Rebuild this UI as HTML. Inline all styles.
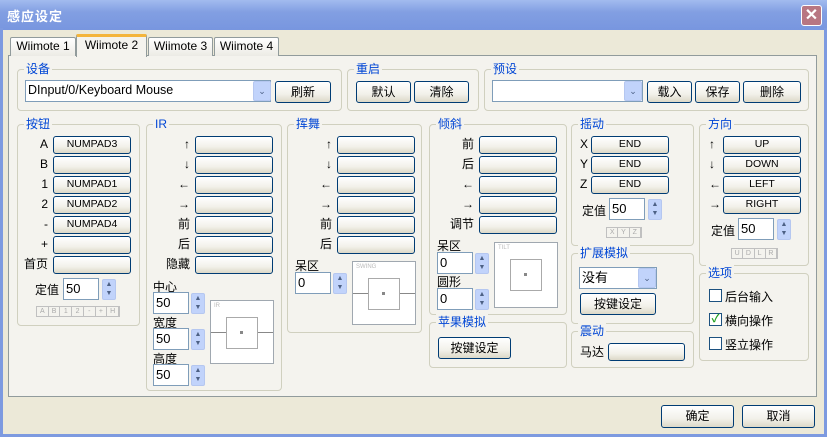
<!DOCTYPE html>
<html><head><meta charset="utf-8"><style>
*{box-sizing:border-box;margin:0;padding:0}
body{width:827px;height:437px;position:relative;overflow:hidden;background:#ece9d8;font:12px "Liberation Sans","Noto Sans CJK SC",sans-serif;color:#000}
div,span{position:absolute}
.title{left:0;top:0;width:827px;height:30px;background:linear-gradient(#a2bbef,#829fe2 40%,#7896df);}
.frame{left:0;top:28px;width:827px;height:409px;border:3px solid #7d9ae0;border-top:none;}
.tt{left:7px;top:6px;color:#fff;font-size:13px;font-weight:bold;letter-spacing:1px}
.cls{left:801px;top:5px;width:21px;height:21px;border:1px solid #fff;border-radius:3px;background:#b87682;color:#fff;font-size:16px;line-height:19px;text-align:center;font-weight:bold}
.panel{left:8px;top:55px;width:809px;height:342px;background:#f4f3ee;border:1px solid #919b9c}
.tab{top:37px;height:19px;border:1px solid #919b9c;border-bottom:none;background:linear-gradient(#fff,#ecebe5);font-size:12px;text-align:center;line-height:17px;border-radius:2px 2px 0 0}
.tab.a{top:34px;height:23px;background:#f4f3ee;border-top:3px solid #f4b53c;line-height:17px;z-index:2}
.g{border:1px solid #d0d0bf;border-radius:4px}
.gl{top:-9px;left:6px;background:#f4f3ee;color:#0046d5;padding:0 2px;white-space:nowrap;font-size:12px;line-height:16px}
.b{border:1px solid #003c74;border-radius:3px;background:linear-gradient(#fff,#f2f1ea 60%,#dcd8c8);text-align:center;font-size:10.5px;line-height:15px;white-space:nowrap}
.bb{font-size:12px;line-height:20px}
.l{text-align:right;width:40px;line-height:17px;white-space:nowrap}
.in{border:1px solid #7f9db9;background:#fff;padding-left:2px;font-size:13px;line-height:19px}
.sp{width:14px;height:21px;background:#c1d3fb;border:1px solid #b5c7f0;border-radius:2px;color:#4d6185;font-size:7px;line-height:9px;text-align:center}
.cb{width:18px;height:20px;background:#c1d3fb;border:1px solid #b5c7f0;border-radius:2px;color:#4d6185;font-size:9px;line-height:18px;text-align:center}
.box{background:#fff;border:1px solid #a0a8b0}
.sm{height:11px;border:1px solid #c0c0c0;font-size:7px;color:#aaa;line-height:9px;display:flex}
.sm i{font-style:normal;flex:1;border-right:1px solid #c0c0c0;text-align:center}
.ck{width:13px;height:13px;border:1px solid #1c5180;background:#fff}
</style></head><body>
<div class="title"></div><div class="frame"></div>
<div class="tt">感应设定</div><div class="cls">✕</div>
<div class="panel"></div>
<div class="tab" style="left:10px;width:66px">Wiimote 1</div>
<div class="tab a" style="left:76px;width:71px">Wiimote 2</div>
<div class="tab" style="left:148px;width:65px">Wiimote 3</div>
<div class="tab" style="left:214px;width:65px">Wiimote 4</div>

<div class="g" style="left:17px;top:69px;width:325px;height:42px"><span class="gl">设备</span></div>
<div class="in" style="left:25px;top:80px;width:246px;height:22px;font-size:12.5px">DInput/0/Keyboard Mouse</div>
<div class="cb" style="left:253px;top:81px">⌄</div>
<div class="b bb" style="left:275px;top:81px;width:56px;height:22px">刷新</div>
<div class="g" style="left:347px;top:69px;width:132px;height:42px"><span class="gl">重启</span></div>
<div class="b bb" style="left:356px;top:81px;width:55px;height:22px">默认</div>
<div class="b bb" style="left:414px;top:81px;width:55px;height:22px">清除</div>
<div class="g" style="left:484px;top:69px;width:325px;height:42px"><span class="gl">预设</span></div>
<div class="in" style="left:492px;top:80px;width:151px;height:22px"></div>
<div class="cb" style="left:624px;top:81px">⌄</div>
<div class="b bb" style="left:647px;top:81px;width:45px;height:22px">载入</div>
<div class="b bb" style="left:695px;top:81px;width:45px;height:22px">保存</div>
<div class="b bb" style="left:743px;top:81px;width:58px;height:22px">删除</div>

<div class="g" style="left:17px;top:124px;width:123px;height:202px"><span class="gl">按钮</span></div>
<div class="l" style="left:8px;top:136px">A</div><div class="b" style="left:53px;top:136px;width:78px;height:18px">NUMPAD3</div>
<div class="l" style="left:8px;top:156px">B</div><div class="b" style="left:53px;top:156px;width:78px;height:18px"></div>
<div class="l" style="left:8px;top:176px">1</div><div class="b" style="left:53px;top:176px;width:78px;height:18px">NUMPAD1</div>
<div class="l" style="left:8px;top:196px">2</div><div class="b" style="left:53px;top:196px;width:78px;height:18px">NUMPAD2</div>
<div class="l" style="left:8px;top:216px">-</div><div class="b" style="left:53px;top:216px;width:78px;height:18px">NUMPAD4</div>
<div class="l" style="left:8px;top:236px">+</div><div class="b" style="left:53px;top:236px;width:78px;height:18px"></div>
<div class="l" style="left:8px;top:256px">首页</div><div class="b" style="left:53px;top:256px;width:78px;height:18px"></div>
<div style="left:35px;top:281px">定值</div>
<div class="in" style="left:63px;top:278px;width:36px;height:22px">50</div>
<div class="sp" style="left:102px;top:279px">▲<br>▼</div>
<div class="sm" style="left:36px;top:306px;width:84px"><i>A</i><i>B</i><i>1</i><i>2</i><i>-</i><i>+</i><i>H</i></div>

<div class="g" style="left:146px;top:124px;width:136px;height:267px"><span class="gl">IR</span></div>
<div class="l" style="left:150px;top:136px">↑</div><div class="b" style="left:195px;top:136px;width:78px;height:18px"></div>
<div class="l" style="left:150px;top:156px">↓</div><div class="b" style="left:195px;top:156px;width:78px;height:18px"></div>
<div class="l" style="left:150px;top:176px">←</div><div class="b" style="left:195px;top:176px;width:78px;height:18px"></div>
<div class="l" style="left:150px;top:196px">→</div><div class="b" style="left:195px;top:196px;width:78px;height:18px"></div>
<div class="l" style="left:150px;top:216px">前</div><div class="b" style="left:195px;top:216px;width:78px;height:18px"></div>
<div class="l" style="left:150px;top:236px">后</div><div class="b" style="left:195px;top:236px;width:78px;height:18px"></div>
<div class="l" style="left:150px;top:256px">隐藏</div><div class="b" style="left:195px;top:256px;width:78px;height:18px"></div>
<div style="left:153px;top:278px">中心</div>
<div class="in" style="left:153px;top:292px;width:36px;height:22px">50</div><div class="sp" style="left:191px;top:293px">▲<br>▼</div>
<div style="left:153px;top:314px">宽度</div>
<div class="in" style="left:153px;top:328px;width:36px;height:22px">50</div><div class="sp" style="left:191px;top:329px">▲<br>▼</div>
<div style="left:153px;top:350px">高度</div>
<div class="in" style="left:153px;top:364px;width:36px;height:22px">50</div><div class="sp" style="left:191px;top:365px">▲<br>▼</div>
<div class="box" style="left:210px;top:300px;width:64px;height:64px"><span style="left:3px;top:2px;font-size:6px;color:#bbb">IR</span><span style="left:0;top:31px;width:62px;height:1px;background:#888"></span><span style="left:15px;top:16px;width:32px;height:32px;border:1px solid #aaa;background:#fff"></span><span style="left:29px;top:30px;width:3px;height:3px;background:#888"></span></div>

<div class="g" style="left:287px;top:124px;width:135px;height:209px"><span class="gl">挥舞</span></div>
<div class="l" style="left:292px;top:136px">↑</div><div class="b" style="left:337px;top:136px;width:78px;height:18px"></div>
<div class="l" style="left:292px;top:156px">↓</div><div class="b" style="left:337px;top:156px;width:78px;height:18px"></div>
<div class="l" style="left:292px;top:176px">←</div><div class="b" style="left:337px;top:176px;width:78px;height:18px"></div>
<div class="l" style="left:292px;top:196px">→</div><div class="b" style="left:337px;top:196px;width:78px;height:18px"></div>
<div class="l" style="left:292px;top:216px">前</div><div class="b" style="left:337px;top:216px;width:78px;height:18px"></div>
<div class="l" style="left:292px;top:236px">后</div><div class="b" style="left:337px;top:236px;width:78px;height:18px"></div>
<div style="left:295px;top:257px">呆区</div>
<div class="in" style="left:295px;top:272px;width:36px;height:22px">0</div><div class="sp" style="left:333px;top:273px">▲<br>▼</div>
<div class="box" style="left:352px;top:261px;width:64px;height:64px"><span style="left:3px;top:2px;font-size:6px;color:#bbb">SWING</span><span style="left:0;top:31px;width:62px;height:1px;background:#888"></span><span style="left:15px;top:16px;width:32px;height:32px;border:1px solid #aaa;background:#fff"></span><span style="left:29px;top:30px;width:3px;height:3px;background:#888"></span></div>

<div class="g" style="left:429px;top:124px;width:138px;height:191px"><span class="gl">倾斜</span></div>
<div class="l" style="left:434px;top:136px">前</div><div class="b" style="left:479px;top:136px;width:78px;height:18px"></div>
<div class="l" style="left:434px;top:156px">后</div><div class="b" style="left:479px;top:156px;width:78px;height:18px"></div>
<div class="l" style="left:434px;top:176px">←</div><div class="b" style="left:479px;top:176px;width:78px;height:18px"></div>
<div class="l" style="left:434px;top:196px">→</div><div class="b" style="left:479px;top:196px;width:78px;height:18px"></div>
<div class="l" style="left:434px;top:216px">调节</div><div class="b" style="left:479px;top:216px;width:78px;height:18px"></div>
<div style="left:437px;top:237px">呆区</div>
<div class="in" style="left:437px;top:252px;width:36px;height:22px">0</div><div class="sp" style="left:475px;top:253px">▲<br>▼</div>
<div style="left:437px;top:273px">圆形</div>
<div class="in" style="left:437px;top:288px;width:36px;height:22px">0</div><div class="sp" style="left:475px;top:289px">▲<br>▼</div>
<div class="box" style="left:494px;top:242px;width:64px;height:66px"><span style="left:3px;top:2px;font-size:6px;color:#bbb">TILT</span><span style="left:15px;top:16px;width:32px;height:32px;border:1px solid #aaa;background:#fff"></span><span style="left:29px;top:30px;width:3px;height:3px;background:#888"></span></div>
<div class="g" style="left:429px;top:322px;width:138px;height:46px"><span class="gl">苹果模拟</span></div>
<div class="b bb" style="left:438px;top:337px;width:73px;height:22px">按键设定</div>

<div class="g" style="left:571px;top:124px;width:123px;height:122px"><span class="gl">摇动</span></div>
<div style="left:580px;top:137px">X</div><div class="b" style="left:591px;top:136px;width:78px;height:18px">END</div>
<div style="left:580px;top:157px">Y</div><div class="b" style="left:591px;top:156px;width:78px;height:18px">END</div>
<div style="left:580px;top:177px">Z</div><div class="b" style="left:591px;top:176px;width:78px;height:18px">END</div>
<div style="left:582px;top:202px">定值</div>
<div class="in" style="left:609px;top:198px;width:36px;height:22px">50</div><div class="sp" style="left:648px;top:199px">▲<br>▼</div>
<div class="sm" style="left:606px;top:227px;width:36px"><i>X</i><i>Y</i><i>Z</i></div>
<div class="g" style="left:571px;top:253px;width:123px;height:71px"><span class="gl">扩展模拟</span></div>
<div class="in" style="left:579px;top:267px;width:78px;height:22px">没有</div><div class="cb" style="left:638px;top:268px">⌄</div>
<div class="b bb" style="left:580px;top:293px;width:76px;height:22px">按键设定</div>
<div class="g" style="left:571px;top:331px;width:123px;height:37px"><span class="gl">震动</span></div>
<div style="left:580px;top:343px">马达</div><div class="b" style="left:608px;top:343px;width:77px;height:18px"></div>

<div class="g" style="left:699px;top:124px;width:110px;height:142px"><span class="gl">方向</span></div>
<div style="left:709px;top:137px">↑</div><div class="b" style="left:723px;top:136px;width:78px;height:18px">UP</div>
<div style="left:709px;top:157px">↓</div><div class="b" style="left:723px;top:156px;width:78px;height:18px">DOWN</div>
<div style="left:709px;top:177px">←</div><div class="b" style="left:723px;top:176px;width:78px;height:18px">LEFT</div>
<div style="left:709px;top:197px">→</div><div class="b" style="left:723px;top:196px;width:78px;height:18px">RIGHT</div>
<div style="left:711px;top:222px">定值</div>
<div class="in" style="left:738px;top:218px;width:36px;height:22px">50</div><div class="sp" style="left:777px;top:219px">▲<br>▼</div>
<div class="sm" style="left:731px;top:248px;width:47px"><i>U</i><i>D</i><i>L</i><i>R</i></div>
<div class="g" style="left:699px;top:273px;width:110px;height:88px"><span class="gl">选项</span></div>
<div class="ck" style="left:709px;top:289px"></div><div style="left:725px;top:288px">后台输入</div>
<div class="ck" style="left:709px;top:313px;color:#21a121;font-size:11px;line-height:11px;text-align:center;font-weight:bold">✓</div><div style="left:725px;top:312px">横向操作</div>
<div class="ck" style="left:709px;top:337px"></div><div style="left:725px;top:336px">竖立操作</div>

<div class="b bb" style="left:661px;top:405px;width:73px;height:23px">确定</div>
<div class="b bb" style="left:742px;top:405px;width:73px;height:23px">取消</div>
</body></html>
